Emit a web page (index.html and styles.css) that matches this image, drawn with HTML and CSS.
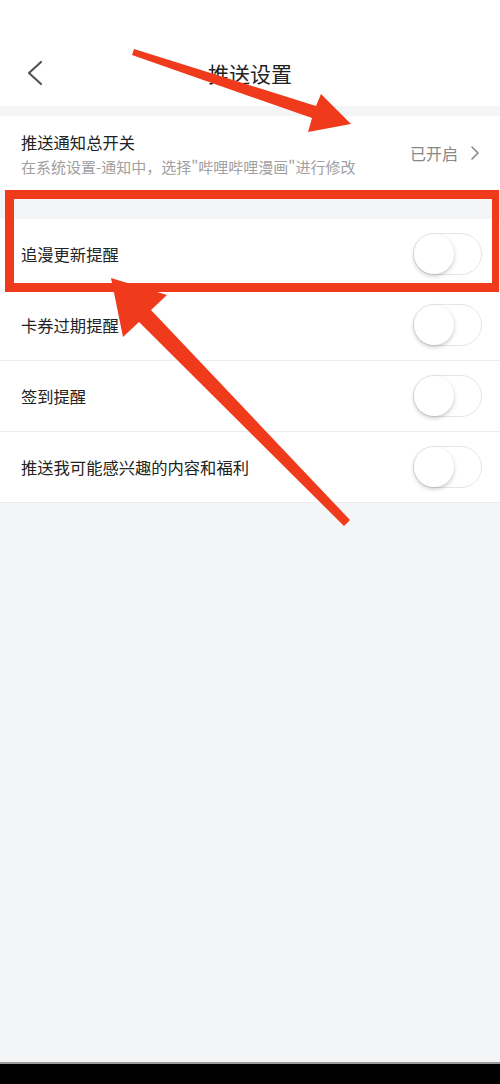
FILE: index.html
```html
<!DOCTYPE html>
<html lang="zh-CN">
<head>
    <meta charset="UTF-8">
    <meta name="viewport" content="width=device-width, initial-scale=1.0">
    <title>推送设置</title>
    <link rel="stylesheet" href="styles.css">
</head>
<body>
    <div class="page">
        <!-- Header -->
        <div class="header">
            <div class="nav">
                <div class="back">
                    <svg width="16" height="26" viewBox="0 0 16 26">
                        <polyline points="14,2 2,13 14,24" fill="none" stroke="#555" stroke-width="2.2" stroke-linecap="round" stroke-linejoin="round"/>
                    </svg>
                </div>
                <div class="title">推送设置</div>
                <div></div>
            </div>
        </div>

        <div class="band band-small"></div>

        <!-- Master switch -->
        <div class="master">
            <div class="master-text">
                <div class="row-title">推送通知总开关</div>
                <div class="row-sub">在系统设置-通知中，选择"哔哩哔哩漫画"进行修改</div>
            </div>
            <div class="status">
                <span>已开启</span>
                <svg width="10" height="16" viewBox="0 0 10 16">
                    <polyline points="2,2 8,8 2,14" fill="none" stroke="#888" stroke-width="1.6" stroke-linecap="round" stroke-linejoin="round"/>
                </svg>
            </div>
        </div>

        <div class="band band-large"></div>

        <!-- Switch list -->
        <div class="list">
            <div class="row">
                <span class="row-title">追漫更新提醒</span>
                <span class="switch"><span class="knob"></span></span>
            </div>
            <div class="row">
                <span class="row-title">卡券过期提醒</span>
                <span class="switch"><span class="knob"></span></span>
            </div>
            <div class="row">
                <span class="row-title">签到提醒</span>
                <span class="switch"><span class="knob"></span></span>
            </div>
            <div class="row">
                <span class="row-title">推送我可能感兴趣的内容和福利</span>
                <span class="switch"><span class="knob"></span></span>
            </div>
        </div>

        <div class="rest"></div>
        <div class="bottom-bar"></div>

        <!-- Annotation overlay -->
        <div class="highlight"></div>
        <svg class="arrows" viewBox="0 0 500 1084" width="500" height="1084">
            <polygon points="134,49 316,106 321,94 351,124 308,132 312,118 132,55" fill="#f03a1c"/>
            <polygon points="111,278 167,295 151,310 350,520 344,526 139,322 123,337" fill="#f03a1c"/>
        </svg>
    </div>
</body>
</html>
```

FILE: styles.css
```css
body {
    margin: 0;
    font-family: "Noto Sans CJK SC", "Noto Sans", sans-serif;
    background: #f4f5f7;
    color: #222;
}

.page {
    position: relative;
    width: 500px;
    height: 1084px;
    display: flex;
    flex-direction: column;
    overflow: hidden;
}

/* Header */
.header {
    background: #fff;
    padding-top: 40px;
}

.nav {
    height: 66px;
    display: grid;
    grid-template-columns: 1fr auto 1fr;
    align-items: center;
}

.back {
    padding-left: 27px;
    display: flex;
    align-items: center;
}

.title {
    font-size: 21px;
    color: #222;
}

.band {
    background: #f4f5f7;
}

.band-small {
    height: 10px;
}

.band-large {
    height: 29px;
}

/* Master switch row */
.master {
    background: #fff;
    height: 74px;
    padding: 0 20px 0 21px;
    display: flex;
    align-items: center;
    justify-content: space-between;
}

.master-text {
    display: flex;
    flex-direction: column;
    gap: 2px;
}

.row-title {
    font-size: 16.3px;
    color: #222;
}

.row-sub {
    font-size: 15px;
    color: #a0a0a0;
}

.status {
    display: flex;
    align-items: center;
    gap: 12px;
    font-size: 16px;
    color: #888;
}

/* Switch list */
.list {
    background: #fff;
}

.row {
    height: 70px;
    padding: 0 18px 0 21px;
    display: flex;
    align-items: center;
    justify-content: space-between;
    border-bottom: 1px solid #ececec;
}

.switch {
    width: 67px;
    height: 40px;
    border: 1px solid #e6e6e6;
    border-radius: 21px;
    background: #fff;
    display: flex;
    align-items: center;
}

.knob {
    width: 40px;
    height: 40px;
    border-radius: 50%;
    background: #fff;
    box-shadow: 0 2px 4px rgba(0, 0, 0, 0.22);
}

.rest {
    flex: 1;
    background: #f4f5f7;
    border-bottom: 2px solid #9a9a9a;
}

.bottom-bar {
    height: 20px;
    background: #000;
}

/* Annotations */
.highlight {
    position: absolute;
    left: 5px;
    top: 190px;
    width: 478px;
    height: 84px;
    border: 9px solid #f03a1c;
    border-right-width: 7px;
}

.arrows {
    position: absolute;
    left: 0;
    top: 0;
    pointer-events: none;
}
```
